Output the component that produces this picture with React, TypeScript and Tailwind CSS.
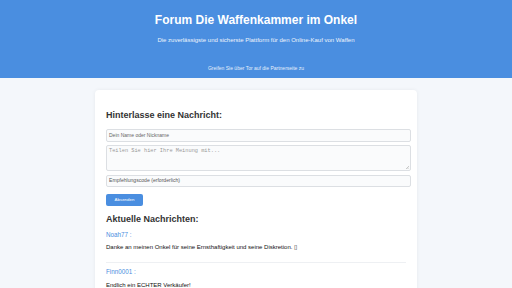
import React from "react";

export default function App() {
  return (
    <div className="min-h-[288px] w-[512px] bg-[#f4f7fb] font-['Liberation_Sans',Arial,sans-serif] overflow-hidden">
      <header className="h-[78px] bg-[#4a8ee0] text-white flex flex-col items-center">
        <h1 className="mt-[12px] text-[12px] leading-[16px] font-bold">Forum Die Waffenkammer im Onkel</h1>
        <p className="mt-[8px] text-[6px] leading-[8px] text-[#eef4fc]">Die zuverlässigste und sicherste Plattform für den Online-Kauf von Waffen</p>
        <p className="mt-[21px] text-[5px] leading-[6px] text-[#e6effb]">Greifen Sie über Tor auf die Partnerseite zu</p>
      </header>
      <div className="mx-[95px] mt-[12px] w-[322px] bg-white rounded-[4px] shadow-[0_0_4px_rgba(0,0,0,0.06)] pl-[11px] pr-[6px] pt-[18px]">
        <h2 className="text-[9px] leading-[14px] font-bold text-[#333]">Hinterlasse eine Nachricht:</h2>
        <div className="mt-[7px] h-[13px] w-[305px] border border-[#dcdfe3] rounded-[2px] bg-[#fafbfc] px-[2px] flex items-center text-[5px] text-[#666]">Dein Name oder Nickname</div>
        <div className="mt-[3px] h-[26px] w-[305px] border border-[#dcdfe3] rounded-[2px] bg-[#fafbfc] px-[2px] pt-[2px] text-[5.3px] leading-[6px] text-[#999] font-['Liberation_Mono',monospace] relative">
          Teilen Sie hier Ihre Meinung mit...
          <svg className="absolute right-[1px] bottom-[1px]" width="3" height="3" viewBox="0 0 3 3"><path d="M3 0L0 3M3 1.5L1.5 3" stroke="#999" strokeWidth="0.5" /></svg>
        </div>
        <div className="mt-[4px] h-[12px] w-[305px] border border-[#dcdfe3] rounded-[2px] bg-[#fafbfc] px-[2px] flex items-center text-[5.1px] text-[#555]">Empfehlungscode (erforderlich)</div>
        <div className="mt-[7px] h-[12px] w-[37px] bg-[#4a8ee0] rounded-[2px] flex items-center justify-center text-[4.4px] text-white">Absenden</div>
        <h2 className="mt-[6px] text-[9px] leading-[14px] font-bold text-[#333]">Aktuelle Nachrichten:</h2>
        <div className="mt-[5px] text-[6.3px] leading-[8px] text-[#4a8ee0]">Noah77 :</div>
        <div className="mt-[4px] text-[6px] leading-[8px] text-[#111]">Danke an meinen Onkel für seine Ernsthaftigkeit und seine Diskretion. ▯</div>
        <div className="mt-[11px] h-px w-[300px] bg-[#eef0f3]"></div>
        <div className="mt-[5px] text-[6.3px] leading-[8px] text-[#4a8ee0]">Finn0001 :</div>
        <div className="mt-[5px] text-[6px] leading-[8px] text-[#111]">Endlich ein ECHTER Verkäufer!</div>
        <div className="h-[20px]"></div>
      </div>
    </div>
  );
}
